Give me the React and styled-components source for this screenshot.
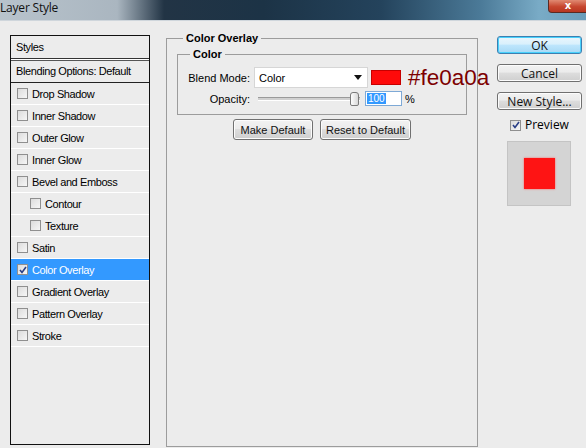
import React from "react";
import styled, { createGlobalStyle } from "styled-components";

const GlobalStyle = createGlobalStyle`
  html, body {
    margin: 0;
    padding: 0;
    background: #ececec;
  }
  body {
    font-family: "Liberation Sans", Arial, sans-serif;
    font-size: 11px;
    color: #000;
  }
`;

const Window = styled.div`
  width: 586px;
  height: 448px;
  background: #ececec;
  display: flex;
  flex-direction: column;
  overflow: hidden;
`;

const TitleBar = styled.div`
  height: 20px;
  flex: none;
  display: flex;
  align-items: flex-start;
  justify-content: space-between;
  border-bottom: 1px solid #cfd6dc;
  background: linear-gradient(
    90deg,
    #b8c3cc 0%,
    #aab6c0 20%,
    #223445 28%,
    #1c3346 45%,
    #24435c 65%,
    #4b7a98 82%,
    #79abc6 92%,
    #6b9dba 100%
  );
`;

const Title = styled.div`
  font-family: "Open Sans", "Noto Sans", sans-serif;
  font-size: 12px;
  line-height: 16px;
  color: #111;
  letter-spacing: -0.2px;
`;

const CloseButton = styled.div`
  width: 38px;
  height: 12px;
  margin-right: -2px;
  border: 1px solid #5a2a22;
  border-top: none;
  border-radius: 0 0 0 4px;
  background: linear-gradient(#e08a72, #c7472f 55%, #b73620);
  display: flex;
  align-items: center;
  justify-content: center;
  color: #fff;
  font-family: "DejaVu Sans", sans-serif;
  font-weight: bold;
  font-size: 10px;
  line-height: 10px;
`;

const Body = styled.div`
  flex: 1;
  display: flex;
  align-items: flex-start;
  padding: 14px 0 0 10px;
`;

const StyleList = styled.div`
  width: 140px;
  height: 410px;
  flex: none;
  box-sizing: border-box;
  border: 1px solid #111;
  display: flex;
  flex-direction: column;
  letter-spacing: -0.4px;
`;

const ListHeader = styled.div`
  height: 22px;
  line-height: 22px;
  padding-left: 5px;
  border-bottom: 1px solid #333;
  box-shadow: 0 1px 0 #fff, 0 2px 0 #555;
  margin-bottom: 2px;
`;

const BlendRow = styled.div`
  height: 21px;
  line-height: 21px;
  padding-left: 5px;
  border-bottom: 1px solid #222;
`;

const Row = styled.div`
  height: 21px;
  display: flex;
  align-items: center;
  gap: 4px;
  padding-left: ${(p) => (p.$indent ? 19 : 6)}px;
  border-bottom: 1px solid #fff;
  background: ${(p) => (p.$active ? "#3399ff" : "transparent")};
  color: ${(p) => (p.$active ? "#fff" : "#000")};
`;

const Box = styled.span`
  width: 9px;
  height: 9px;
  flex: none;
  border: 1px solid #8f8f8f;
  background: linear-gradient(135deg, #dcdcdc, #f6f6f6);
  display: flex;
  align-items: center;
  justify-content: center;
`;

function Check({ checked }) {
  return (
    <Box>
      {checked && (
        <svg width="8" height="8" viewBox="0 0 8 8">
          <path d="M1 4 L3 6.5 L7 1" fill="none" stroke="#2a3f86" strokeWidth="1.6" />
        </svg>
      )}
    </Box>
  );
}

const Panel = styled.fieldset`
  margin: -3px 0 0 16px;
  width: 312px;
  height: 415px;
  flex: none;
  box-sizing: border-box;
  padding: 0 10px;
  border: 1px solid #9c9c9c;
  min-width: 0;
`;

const Legend = styled.legend`
  font-weight: bold;
  font-size: 11px;
  line-height: 13px;
  padding: 0 3px;
  margin-left: ${(p) => p.$offset}px;
`;

const SubGroup = styled.fieldset`
  margin: 3px 0 0;
  padding: 0 8px 8px;
  border: 1px solid #9c9c9c;
  min-width: 0;
`;

const FieldRow = styled.div`
  display: flex;
  align-items: center;
  height: ${(p) => p.$h}px;
  margin-top: ${(p) => p.$mt}px;
  & > * {
    flex: none;
  }
`;

const Label = styled.div`
  width: 64px;
  text-align: right;
  margin-right: ${(p) => p.$gap}px;
`;

const Select = styled.div`
  width: 114px;
  height: 21px;
  box-sizing: border-box;
  background: #fff;
  border: 1px solid #d6d6d6;
  display: flex;
  align-items: center;
  justify-content: space-between;
  padding: 0 5px 0 4px;
`;

const Arrow = styled.span`
  width: 0;
  height: 0;
  border-left: 4px solid transparent;
  border-right: 4px solid transparent;
  border-top: 5px solid #111;
`;

const Swatch = styled.div`
  width: 30px;
  height: 15px;
  box-sizing: border-box;
  margin-left: 3px;
  background: #fe0a0a;
  border: 1px solid #c60000;
`;

const HexText = styled.div`
  margin-left: 7px;
  font-family: "Liberation Sans", Arial, sans-serif;
  font-size: 22.5px;
  line-height: 20px;
  color: #7d0000;
  white-space: nowrap;
  position: relative;
  z-index: 1;
`;

const Slider = styled.div`
  width: 102px;
  height: 15px;
  display: flex;
  align-items: center;
  position: relative;
`;

const Track = styled.div`
  flex: 1;
  height: 2px;
  border-top: 1px solid #9a9a9a;
  border-bottom: 1px solid #fff;
  background: #d0d0d0;
`;

const Thumb = styled.div`
  position: absolute;
  right: 1px;
  top: 1px;
  width: 7px;
  height: 12px;
  border: 1px solid #7a7a7a;
  border-radius: 3px 3px 2px 2px;
  background: linear-gradient(90deg, #fdfdfd, #d8d8d8);
`;

const NumberBox = styled.div`
  width: 37px;
  height: 15px;
  box-sizing: border-box;
  margin-left: 5px;
  background: #fff;
  border: 1px solid #7ea9d6;
  display: flex;
  align-items: center;
  padding-left: 1px;
`;

const Selected = styled.span`
  background: #3399ff;
  color: #fff;
  font-size: 10px;
  line-height: 11px;
  padding: 0 1px;
`;

const Unit = styled.span`
  margin-left: 3px;
`;

const ButtonRow = styled.div`
  display: flex;
  justify-content: center;
  gap: 7px;
  margin-top: 4px;
`;

const Button = styled.button`
  height: ${(p) => p.$h || 21}px;
  width: ${(p) => p.$w}px;
  padding: 0;
  font-family: ${(p) => (p.$big ? '"Open Sans", "Noto Sans", sans-serif' : '"Liberation Sans", Arial, sans-serif')};
  font-size: ${(p) => (p.$big ? 12 : 11)}px;
  color: #111;
  border-radius: 3px;
  border: 1px solid ${(p) => (p.$primary ? "#3c7fb1" : "#707070")};
  box-shadow: inset 0 0 0 1px ${(p) => (p.$primary ? "#48d1fc" : "#fcfcfc")};
  background: ${(p) =>
    p.$primary
      ? "linear-gradient(#eaf6fd 0%, #d9f0fc 45%, #bee6fd 50%, #a7d9f5 100%)"
      : "linear-gradient(#f2f2f2 0%, #ebebeb 45%, #dddddd 50%, #cfcfcf 100%)"};
  display: flex;
  align-items: center;
  justify-content: center;
`;

const SideColumn = styled.div`
  width: 85px;
  flex: none;
  margin: 1px 0 0 19px;
  display: flex;
  flex-direction: column;
  gap: 10px;
`;

const PreviewToggle = styled.label`
  display: flex;
  align-items: center;
  gap: 4px;
  margin: -2px 0 0 13px;
  font-family: "Open Sans", "Noto Sans", sans-serif;
  font-size: 12px;
  line-height: 14px;
`;

const PreviewBox = styled.div`
  width: 64px;
  height: 65px;
  box-sizing: border-box;
  margin: -1px 0 0 10px;
  background: #d4d4d4;
  border: 1px solid #c4c4c4;
  display: flex;
  align-items: center;
  justify-content: center;
`;

const PreviewSquare = styled.div`
  width: 31px;
  height: 31px;
  background: #fe1414;
  box-shadow: 0 0 2px #ff6060;
`;

const styleItems = [
  { name: "Drop Shadow" },
  { name: "Inner Shadow" },
  { name: "Outer Glow" },
  { name: "Inner Glow" },
  { name: "Bevel and Emboss" },
  { name: "Contour", indent: true },
  { name: "Texture", indent: true },
  { name: "Satin" },
  { name: "Color Overlay", active: true, checked: true },
  { name: "Gradient Overlay" },
  { name: "Pattern Overlay" },
  { name: "Stroke" },
];

export default function App() {
  return (
    <Window>
      <GlobalStyle />
      <TitleBar>
        <Title>Layer Style</Title>
        <CloseButton>x</CloseButton>
      </TitleBar>
      <Body>
        <StyleList>
          <ListHeader>Styles</ListHeader>
          <BlendRow>Blending Options: Default</BlendRow>
          {styleItems.map((item) => (
            <Row key={item.name} $indent={item.indent} $active={item.active}>
              <Check checked={item.checked} />
              {item.name}
            </Row>
          ))}
        </StyleList>

        <Panel>
          <Legend $offset={6}>Color Overlay</Legend>
          <SubGroup>
            <Legend $offset={4}>Color</Legend>
            <FieldRow $h={21} $mt={6}>
              <Label $gap={4}>Blend Mode:</Label>
              <Select>
                Color
                <Arrow />
              </Select>
              <Swatch />
              <HexText>#fe0a0a</HexText>
            </FieldRow>
            <FieldRow $h={15} $mt={3}>
              <Label $gap={8}>Opacity:</Label>
              <Slider>
                <Track />
                <Thumb />
              </Slider>
              <NumberBox>
                <Selected>100</Selected>
              </NumberBox>
              <Unit>%</Unit>
            </FieldRow>
          </SubGroup>
          <ButtonRow>
            <Button $w={80}>Make Default</Button>
            <Button $w={91}>Reset to Default</Button>
          </ButtonRow>
        </Panel>

        <SideColumn>
          <Button $w={85} $h={18} $big $primary>OK</Button>
          <Button $w={85} $h={18} $big>Cancel</Button>
          <Button $w={85} $h={18} $big>New Style...</Button>
          <PreviewToggle>
            <Check checked />
            Preview
          </PreviewToggle>
          <PreviewBox>
            <PreviewSquare />
          </PreviewBox>
        </SideColumn>
      </Body>
    </Window>
  );
}
